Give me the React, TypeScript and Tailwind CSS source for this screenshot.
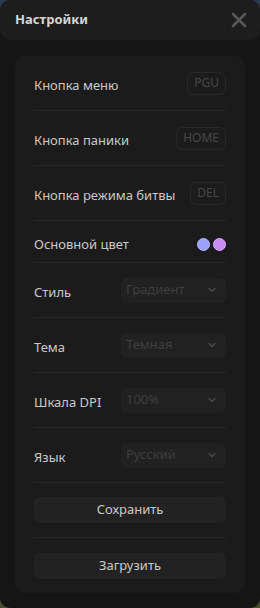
import { ChevronDown } from "lucide-react";

const font = { fontFamily: '"Noto Sans", "Open Sans", sans-serif' };

function Divider() {
  return <div className="h-px bg-[#262626]" />;
}

function Label({ children }: { children: React.ReactNode }) {
  return <span className="mt-[5px] text-[13px] text-[#c9c9c9]">{children}</span>;
}

function KeyRow({ label, keyName }: { label: string; keyName: string }) {
  return (
    <div className="flex h-[54px] items-center justify-between">
      <Label>{label}</Label>
      <span className="flex h-[23px] items-center rounded-[6px] border border-[#282828] px-[6px] text-[12px] text-[#474747]">
        {keyName}
      </span>
    </div>
  );
}

function SelectRow({ label, value }: { label: string; value: string }) {
  return (
    <div className="flex h-[54px] items-center justify-between">
      <Label>{label}</Label>
      <div className="flex h-[25px] w-[105px] items-center justify-between rounded-[6px] bg-[#212121] pl-[5px] pr-[8px]">
        <span className="text-[13px] text-[#3e3e3e]">{value}</span>
        <ChevronDown size={12} strokeWidth={2.5} className="text-[#4a4a4a]" />
      </div>
    </div>
  );
}

export default function App() {
  return (
    <div className="h-[608px] w-[260px] bg-gradient-to-b from-[#2a3a52] to-[#4a4d2c]" style={font}>
      <div className="flex h-full flex-col overflow-hidden rounded-[10px] bg-[#151515]">
        {/* Header */}
        <div className="flex h-[40px] shrink-0 items-center justify-between rounded-[10px] bg-[#1d1d1d] pl-[15px] pr-[13px]">
          <span className="text-[13px] font-bold text-[#d6d6d6]">Настройки</span>
          <svg width="16" height="16" viewBox="0 0 16 16" className="text-[#565656]">
            <path d="M2 2 L14 14 M14 2 L2 14" stroke="currentColor" strokeWidth="2.6" strokeLinecap="round" />
          </svg>
        </div>

        {/* Settings card */}
        <div className="mx-[15px] mt-[16px] flex flex-col rounded-[10px] bg-[#1b1b1b] px-[19px]">
          <KeyRow label="Кнопка меню" keyName="PGU" />
          <Divider />
          <KeyRow label="Кнопка паники" keyName="HOME" />
          <Divider />
          <KeyRow label="Кнопка режима битвы" keyName="DEL" />
          <Divider />
          <div className="flex h-[41px] items-center justify-between pt-[6px]">
            <span className="text-[13px] text-[#c9c9c9]">Основной цвет</span>
            <div className="flex gap-[3px]">
              <span className="h-[13px] w-[13px] rounded-full border border-[#b4b8ff] bg-[#9ca1f9]" />
              <span className="h-[13px] w-[13px] rounded-full border border-[#dcaaff] bg-[#c78df2]" />
            </div>
          </div>
          <Divider />
          <SelectRow label="Стиль" value="Градиент" />
          <Divider />
          <SelectRow label="Тема" value="Темная" />
          <Divider />
          <SelectRow label="Шкала DPI" value="100%" />
          <Divider />
          <SelectRow label="Язык" value="Русский" />
          <Divider />
          <div className="flex h-[54px] items-center">
            <button className="h-[26px] w-full rounded-[6px] bg-[#222222] text-[13px] text-[#c9c9c9]">Сохранить</button>
          </div>
          <Divider />
          <div className="flex h-[55px] items-center">
            <button className="h-[26px] w-full rounded-[6px] bg-[#222222] text-[13px] text-[#c9c9c9]">Загрузить</button>
          </div>
        </div>
      </div>
    </div>
  );
}
